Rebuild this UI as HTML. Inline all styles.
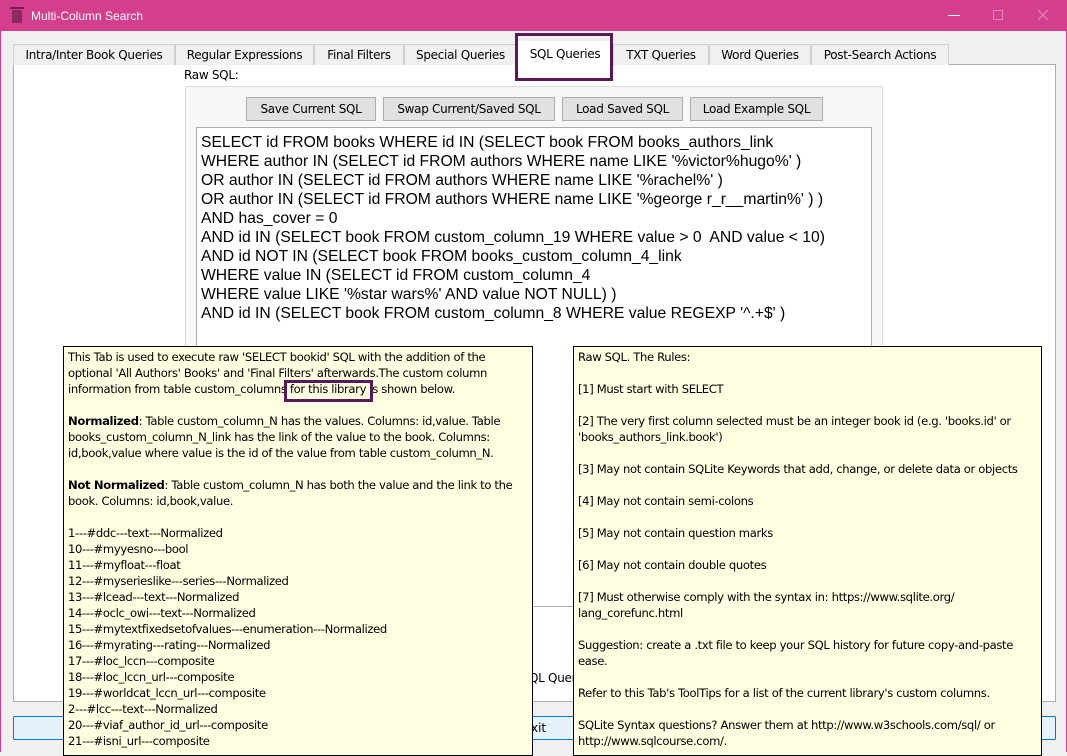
<!DOCTYPE html>
<html><head><meta charset="utf-8"><style>
*{margin:0;padding:0;box-sizing:border-box}
body{width:1067px;height:752px;overflow:hidden;background:#f0f0f0;font-family:"DejaVu Sans","Liberation Sans",sans-serif;font-size:12px;color:#000;position:relative;border-left:1px solid #d33f8c;border-right:1px solid #d33f8c}
.abs{position:absolute}
#title{left:0;top:0;width:1067px;height:31px;background:#d33f8c;color:#fff;font-family:"Liberation Sans",sans-serif;font-size:12px}
.tab{position:absolute;top:44px;height:21px;border:1px solid #d0d0d0;border-bottom:none;background:#f0f0f0;font-size:12px;line-height:20px;text-align:center;letter-spacing:-0.3px}
#pane{left:12px;top:64px;width:1043px;height:638px;background:#fff;border:1px solid #adadad}
.btn{position:absolute;top:97px;height:24px;border:1px solid #adadad;background:#e1e1e1;font-size:12px;line-height:22px;text-align:center;letter-spacing:-0.3px}
#sql{left:195px;top:127px;width:676px;height:480px;background:#fff;border:1px solid #adadad;font-family:"Liberation Sans",sans-serif;font-size:15.7px;line-height:19px;padding:5px 0 0 4px;white-space:pre}
.tip{position:absolute;top:346px;height:410px;background:#ffffe1;border:1px solid #000;font-size:11.6px;line-height:16px;padding:2px 0 0 4px;letter-spacing:-0.35px;white-space:pre-wrap}
</style></head><body>
<div id="title" class="abs">
<svg class="abs" style="left:9px;top:7px" width="14" height="17"><rect x="0" y="0" width="14" height="2" fill="#7a1b4e"/><rect x="2" y="3" width="10" height="13" fill="#8a2a5e"/></svg>
<span class="abs" style="left:30px;top:9px">Multi-Column Search</span>
<div class="abs" style="left:947px;top:15px;width:12px;height:1px;background:#fff"></div>
<div class="abs" style="left:992px;top:10px;width:10px;height:10px;border:1px solid #e88bbb"></div>
<svg class="abs" style="left:1036px;top:9px" width="12" height="12"><path d="M1 1L11 11M11 1L1 11" stroke="#e88bbb" stroke-width="1"/></svg>
</div>
<div id="pane" class="abs"></div>
<div class="tab" style="left:12px;width:162px">Intra/Inter Book Queries</div>
<div class="tab" style="left:174px;width:139px">Regular Expressions</div>
<div class="tab" style="left:313px;width:90px">Final Filters</div>
<div class="tab" style="left:403px;width:113px">Special Queries</div>
<div class="tab" style="left:612px;width:96px">TXT Queries</div>
<div class="tab" style="left:708px;width:102px">Word Queries</div>
<div class="tab" style="left:810px;width:138px">Post-Search Actions</div>
<div class="abs" style="left:516px;top:41px;width:96px;height:25px;background:#fff;font-size:12px;line-height:26px;text-align:center;letter-spacing:-0.3px">SQL Queries</div>
<div class="abs" style="left:514px;top:33px;width:98px;height:48px;border:3px solid #5a1a5a"></div>
<div class="abs" style="left:183px;top:68px;letter-spacing:-0.3px">Raw SQL:</div>
<div class="abs" style="left:184px;top:86px;width:698px;height:520px;background:#f7f7f7;border:1px solid #dcdcdc;border-radius:2px"></div>
<div class="btn" style="left:245px;width:130px">Save Current SQL</div>
<div class="btn" style="left:382px;width:172px">Swap Current/Saved SQL</div>
<div class="btn" style="left:561px;width:121px">Load Saved SQL</div>
<div class="btn" style="left:689px;width:133px">Load Example SQL</div>
<div id="sql" class="abs">SELECT id FROM books WHERE id IN (SELECT book FROM books_authors_link
WHERE author IN (SELECT id FROM authors WHERE name LIKE '%victor%hugo%' )
OR author IN (SELECT id FROM authors WHERE name LIKE '%rachel%' )
OR author IN (SELECT id FROM authors WHERE name LIKE '%george r_r__martin%' ) )
AND has_cover = 0
AND id IN (SELECT book FROM custom_column_19 WHERE value &gt; 0  AND value &lt; 10)
AND id NOT IN (SELECT book FROM books_custom_column_4_link
WHERE value IN (SELECT id FROM custom_column_4
WHERE value LIKE '%star wars%' AND value NOT NULL) )
AND id IN (SELECT book FROM custom_column_8 WHERE value REGEXP '^.+$' )</div>
<div class="abs" style="left:528px;top:671px;letter-spacing:-0.3px">QL Quer</div>
<div class="abs" style="left:12px;top:716px;width:1043px;height:24px;border:1px solid #0078d7;background:#e5f1fb;border-radius:2px"></div>
<div class="abs" style="left:530px;top:721px">xit</div>
<div class="tip" style="left:62px;width:470px">This Tab is used to execute raw 'SELECT bookid' SQL with the addition of the
optional 'All Authors' Books' and 'Final Filters' afterwards.The custom column
information from table custom_columns for this library is shown below.

<b>Normalized</b>: Table custom_column_N has the values. Columns: id,value. Table
books_custom_column_N_link has the link of the value to the book. Columns:
id,book,value where value is the id of the value from table custom_column_N.

<b>Not Normalized</b>: Table custom_column_N has both the value and the link to the
book. Columns: id,book,value.

1---#ddc---text---Normalized
10---#myyesno---bool
11---#myfloat---float
12---#myserieslike---series---Normalized
13---#lcead---text---Normalized
14---#oclc_owi---text---Normalized
15---#mytextfixedsetofvalues---enumeration---Normalized
16---#myrating---rating---Normalized
17---#loc_lccn---composite
18---#loc_lccn_url---composite
19---#worldcat_lccn_url---composite
2---#lcc---text---Normalized
20---#viaf_author_id_url---composite
21---#isni_url---composite</div>
<div class="abs" style="left:283px;top:380px;width:89px;height:22px;border:3px solid #5a1a5a"></div>
<div class="tip" style="left:572px;width:469px">Raw SQL. The Rules:

[1] Must start with SELECT

[2] The very first column selected must be an integer book id (e.g. 'books.id' or
'books_authors_link.book')

[3] May not contain SQLite Keywords that add, change, or delete data or objects

[4] May not contain semi-colons

[5] May not contain question marks

[6] May not contain double quotes

[7] Must otherwise comply with the syntax in: https://www.sqlite.org/
lang_corefunc.html

Suggestion: create a .txt file to keep your SQL history for future copy-and-paste
ease.

Refer to this Tab's ToolTips for a list of the current library's custom columns.

SQLite Syntax questions? Answer them at http://www.w3schools.com/sql/ or
http://www.sqlcourse.com/.</div>
</body></html>
